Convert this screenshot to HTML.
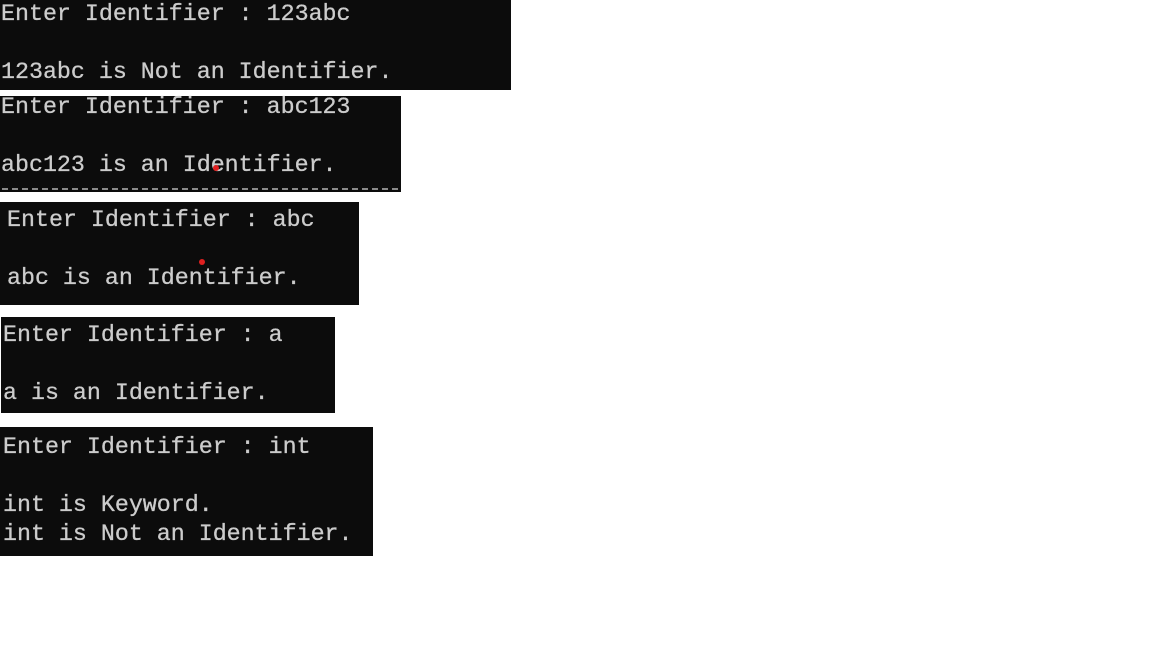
<!DOCTYPE html>
<html><head><meta charset="utf-8"><style>
body{margin:0;width:1152px;height:648px;background:#fff;position:relative;overflow:hidden}
.b{position:absolute;background:#0c0c0c;overflow:hidden}
.t{position:absolute;font-family:"Liberation Mono",monospace;font-size:23.3px;line-height:29px;color:#cccccc;white-space:pre;-webkit-text-stroke:0.3px #cccccc}
.d{position:absolute;width:6px;height:6px;border-radius:50%;background:#e02020}
</style></head><body>
<div class="b" style="left:0;top:0;width:511px;height:90px"></div>
<div class="t" style="left:1px;top:0px">Enter Identifier : 123abc

123abc is Not an Identifier.</div>
<div class="b" style="left:0;top:96px;width:401px;height:96px"></div>
<div style="position:absolute;left:2px;top:188px;width:396px;border-top:2px dashed #8a8a8a"></div>
<div class="t" style="left:1px;top:93px">Enter Identifier : abc123

abc123 is an Identifier.</div>
<div class="b" style="left:0;top:202px;width:359px;height:103px"></div>
<div class="t" style="left:7px;top:206px">Enter Identifier : abc

abc is an Identifier.</div>
<div class="b" style="left:1px;top:317px;width:334px;height:96px"></div>
<div class="t" style="left:3px;top:321px">Enter Identifier : a

a is an Identifier.</div>
<div class="b" style="left:0;top:427px;width:373px;height:129px"></div>
<div class="t" style="left:3px;top:433px">Enter Identifier : int

int is Keyword.
int is Not an Identifier.</div>
<div class="d" style="left:213px;top:165px"></div>
<div class="d" style="left:199px;top:259px"></div>
</body></html>
